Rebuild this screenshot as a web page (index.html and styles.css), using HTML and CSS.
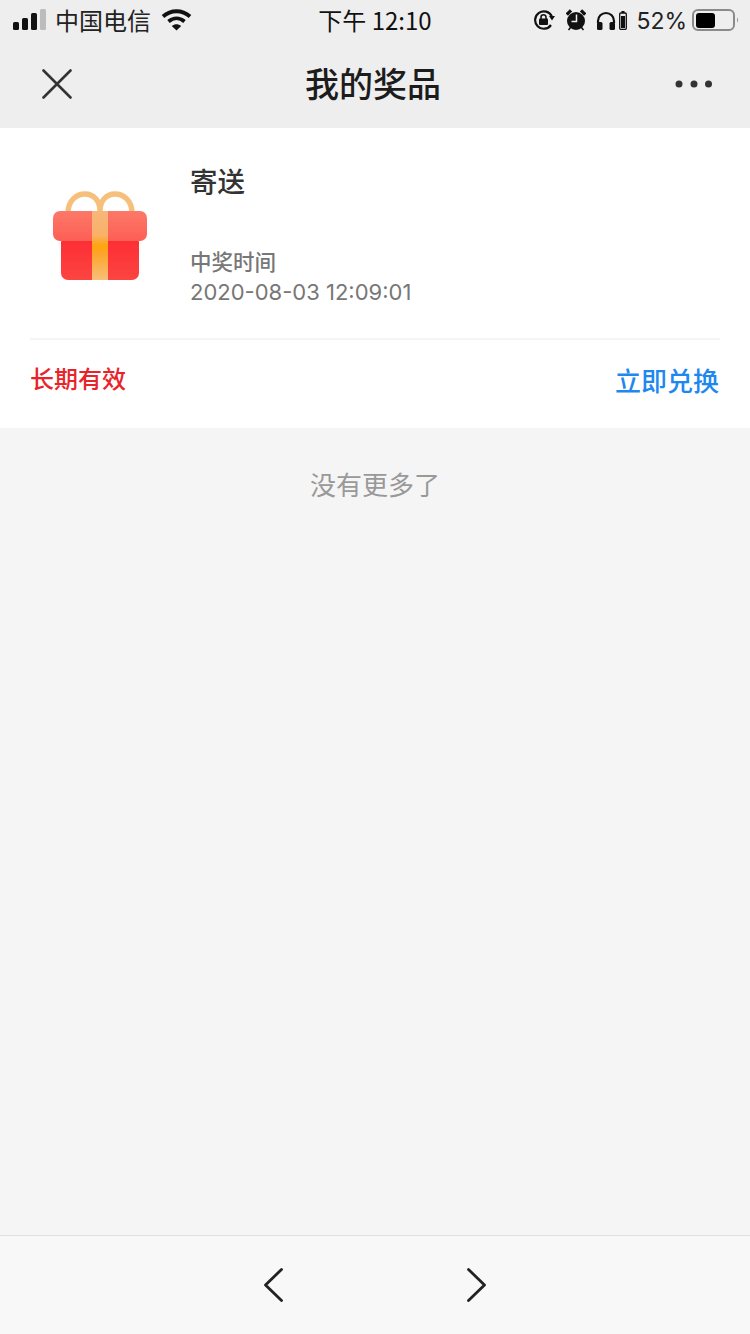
FILE: index.html
```html
<!DOCTYPE html>
<html lang="zh-CN">
<head>
<meta charset="utf-8">
<title>我的奖品</title>
<link rel="stylesheet" href="styles.css">
</head>
<body>
<div class="page">
  <header class="top">
    <div class="status">
      <div class="status-left">
        <svg class="signal" width="33" height="22" viewBox="0 0 33 22"><rect x="0" y="13" width="6" height="8" rx="1.5" fill="#111"/><rect x="9" y="9" width="6" height="12" rx="1.5" fill="#111"/><rect x="18" y="4" width="6" height="17" rx="1.5" fill="#111"/><rect x="27" y="0" width="6" height="21" rx="1.5" fill="#bcbcbc"/></svg>
        <span class="carrier">中国电信</span>
        <svg class="wifi" width="31" height="22" viewBox="0 0 31 22"><path d="M2 7.500C10 .5 21 .5 29 7.500" fill="none" stroke="#111" stroke-width="3.800"/><path d="M7.500 12.500C12.500 8.300 18.500 8.300 23.500 12.500" fill="none" stroke="#111" stroke-width="3.800"/><path d="M10.800 17L15.500 21.500L20.200 17C17.200 14.700 13.800 14.700 10.800 17Z" fill="#111"/></svg>
      </div>
      <div class="time">下午 12:10</div>
      <div class="status-right">
        <svg class="rotlock" width="22" height="20" viewBox="0 0 22 20"><path d="M18.800 6.500A8.700 8.700 0 1 0 18 15" fill="none" stroke="#111" stroke-width="2.200"/><path d="M16 6H22L19 10.500Z" fill="#111"/><rect x="6" y="8.500" width="9" height="6.500" rx="1" fill="#111"/><path d="M8 9V7.200a2.500 2.500 0 0 1 5 0V9" fill="none" stroke="#111" stroke-width="1.600"/></svg>
        <svg class="alarm" width="20" height="22" viewBox="0 0 20 22"><circle cx="10" cy="12" r="9" fill="#111"/><path d="M.8 5.500L5 1.300" stroke="#111" stroke-width="3.200"/><path d="M19.200 5.500L15 1.300" stroke="#111" stroke-width="3.200"/><path d="M2.500 21L5 18M17.500 21L15 18" stroke="#111" stroke-width="1.600"/><path d="M10.500 5.500V12.500H5.500" fill="none" stroke="#eee" stroke-width="1.500"/></svg>
        <svg class="phones" width="20" height="19" viewBox="0 0 20 19"><path d="M2 12V10A8 8 0 0 1 18 10V12" fill="none" stroke="#111" stroke-width="2.200"/><rect x="1" y="11" width="5.500" height="8" rx="1.500" fill="#111"/><rect x="13.500" y="11" width="5.500" height="8" rx="1.500" fill="#111"/></svg>
        <svg class="minibat" width="8" height="19" viewBox="0 0 8 19"><rect x="2.500" y="0" width="3" height="2" fill="#111"/><rect x=".7" y="2" width="6.600" height="16.300" rx="1" fill="none" stroke="#111" stroke-width="1.300"/><rect x="2" y="5" width="4" height="12" fill="#111"/></svg>
        <span class="percent">52%</span>
        <svg class="battery" width="48" height="22" viewBox="0 0 48 22"><rect x="1" y="1" width="41" height="20" rx="5" fill="none" stroke="#8a8a8a" stroke-width="2"/><rect x="4" y="4" width="19" height="15" rx="3" fill="#000"/><path d="M45 8.500c1.500 1 1.500 4 0 5z" fill="#999"/></svg>
      </div>
    </div>
    <nav class="nav">
      <svg class="close" width="30" height="30" viewBox="0 0 30 30"><path d="M1.500 1.500L28.500 28.500M28.500 1.500L1.500 28.500" stroke="#333" stroke-width="2.600" stroke-linecap="round"/></svg>
      <h1 class="title">我的奖品</h1>
      <svg class="more" width="38" height="8" viewBox="0 0 38 8"><circle cx="4" cy="4" r="3.500" fill="#333"/><circle cx="19" cy="4" r="3.500" fill="#333"/><circle cx="33.500" cy="4" r="3.500" fill="#333"/></svg>
    </nav>
  </header>

  <main class="main">
    <section class="card">
      <div class="prize">
        <div class="gift-box">
          <svg class="gift" width="100" height="100" viewBox="0 0 100 100">
            <defs>
              <linearGradient id="lid" x1="0" y1="0" x2="0" y2="1"><stop offset="0" stop-color="#fc7868"/><stop offset="1" stop-color="#fd5f55"/></linearGradient>
              <linearGradient id="body" x1="0" y1="0" x2="0" y2="1"><stop offset="0" stop-color="#fe2a33"/><stop offset="1" stop-color="#fc4540"/></linearGradient>
              <linearGradient id="rib" x1="0" y1="0" x2="0" y2="1"><stop offset="0" stop-color="#f8b67a"/><stop offset=".35" stop-color="#f9b168"/><stop offset=".5" stop-color="#fea40f"/><stop offset=".62" stop-color="#fca52a"/><stop offset="1" stop-color="#f9bf7a"/></linearGradient>
              <filter id="soft" x="-5%" y="-5%" width="110%" height="110%"><feGaussianBlur stdDeviation=".6"/></filter>
            </defs>
            <g filter="url(#soft)">
              <path d="M18 22C18 9 27 3 35 3C44 3 50 10 50 20C50 10 56 3 65 3C73 3 82 9 82 22" fill="none" stroke="#f6c07c" stroke-width="5.500"/>
              <rect x="11" y="44" width="78" height="45" rx="7" fill="url(#body)"/>
              <rect x="3" y="20" width="94" height="30" rx="7" fill="url(#lid)"/>
              <rect x="42" y="20" width="16" height="69" fill="url(#rib)"/>
            </g>
          </svg>
        </div>
        <div class="info">
          <h2 class="name">寄送</h2>
          <p class="label">中奖时间</p>
          <p class="date">2020-08-03 12:09:01</p>
        </div>
      </div>
      <div class="actions">
        <span class="valid">长期有效</span>
        <span class="redeem">立即兑换</span>
      </div>
    </section>
    <p class="end">没有更多了</p>
  </main>

  <footer class="bottom">
    <svg class="chev" width="20" height="34" viewBox="0 0 20 34"><path d="M17.500 1.500L1.500 17L17.500 32.500" fill="none" stroke="#222" stroke-width="2.800" stroke-linecap="round" stroke-linejoin="round"/></svg>
    <svg class="chev" width="20" height="34" viewBox="0 0 20 34"><path d="M2.500 1.500L18.500 17L2.500 32.500" fill="none" stroke="#222" stroke-width="2.800" stroke-linecap="round" stroke-linejoin="round"/></svg>
  </footer>
</div>
</body>
</html>
```

FILE: styles.css
```css
* {
  box-sizing: border-box;
}

html,
body {
  margin: 0;
  padding: 0;
}

body {
  font-family: "Noto Sans CJK SC", "Noto Sans", sans-serif;
  background: #f5f5f5;
}

.page {
  width: 750px;
  height: 1334px;
  display: flex;
  flex-direction: column;
  overflow: hidden;
}

.top {
  height: 128px;
  background: #eeeeee;
  flex: none;
}

.status {
  height: 40px;
  display: grid;
  grid-template-columns: 1fr auto 1fr;
  align-items: center;
  color: #111;
  font-size: 24px;
}

.status-left {
  display: flex;
  align-items: center;
  padding-left: 13px;
}

.carrier {
  margin-left: 9px;
  line-height: 40px;
  color: #222;
  font-size: 24px;
}

.wifi {
  margin-left: 10px;
}

.time {
  font-size: 24px;
  line-height: 40px;
  color: #111;
  font-family: "Noto Sans CJK SC", sans-serif;
}

.status-right {
  display: flex;
  align-items: center;
  justify-content: flex-end;
  padding-right: 10px;
}

.alarm {
  margin-left: 11px;
}

.phones {
  margin-left: 10px;
}

.minibat {
  margin-left: 3px;
}

.percent {
  margin-left: 9px;
  padding-top: 2px;
  font-family: Inter, "Liberation Sans", sans-serif;
  font-size: 23px;
  line-height: 38px;
  color: #222;
}

.battery {
  margin-left: 5px;
}

.nav {
  height: 88px;
  display: flex;
  align-items: center;
  justify-content: space-between;
  padding: 0 37px 0 42px;
}

.title {
  margin: 0 0 2px -1px;
  font-size: 34px;
  line-height: 86px;
  font-weight: 500;
  color: #1c1c1c;
}

.main {
  flex: 1;
  background: #f5f5f5;
}

.card {
  background: #fff;
  padding: 0 30px;
}

.prize {
  height: 212px;
  display: flex;
  border-bottom: 2px solid #f5f5f5;
}

.gift-box {
  width: 160px;
  flex: none;
  padding: 63px 0 0 20px;
}

.gift {
  display: block;
}

.info {
  padding-top: 32px;
}

.name {
  margin: 0;
  font-size: 27.500px;
  line-height: 40px;
  font-weight: 500;
  color: #333;
}

.label {
  margin: 45px 0 0;
  font-size: 21.500px;
  line-height: 32px;
  font-weight: 500;
  color: #777;
}

.date {
  margin: -2px 0 0;
  padding-top: 1px;
  font-family: Inter, "Liberation Sans", sans-serif;
  font-size: 22px;
  line-height: 32px;
  color: #777;
}

.actions {
  height: 88px;
  display: flex;
  align-items: center;
  justify-content: space-between;
  padding: 0 1px 14px 0;
}

.valid {
  font-size: 24px;
  font-weight: 500;
  color: #e8232a;
}

.redeem {
  margin-top: 4px;
  font-size: 26px;
  font-weight: 500;
  color: #1e88f0;
}

.end {
  margin: 37px 0 0;
  text-align: center;
  font-size: 26px;
  line-height: 38px;
  color: #999;
}

.bottom {
  height: 99px;
  flex: none;
  background: #f8f8f8;
  border-top: 1px solid #e0e0e0;
  display: flex;
  align-items: center;
  justify-content: center;
  gap: 182px;
}

.chev {
  display: block;
}
```
